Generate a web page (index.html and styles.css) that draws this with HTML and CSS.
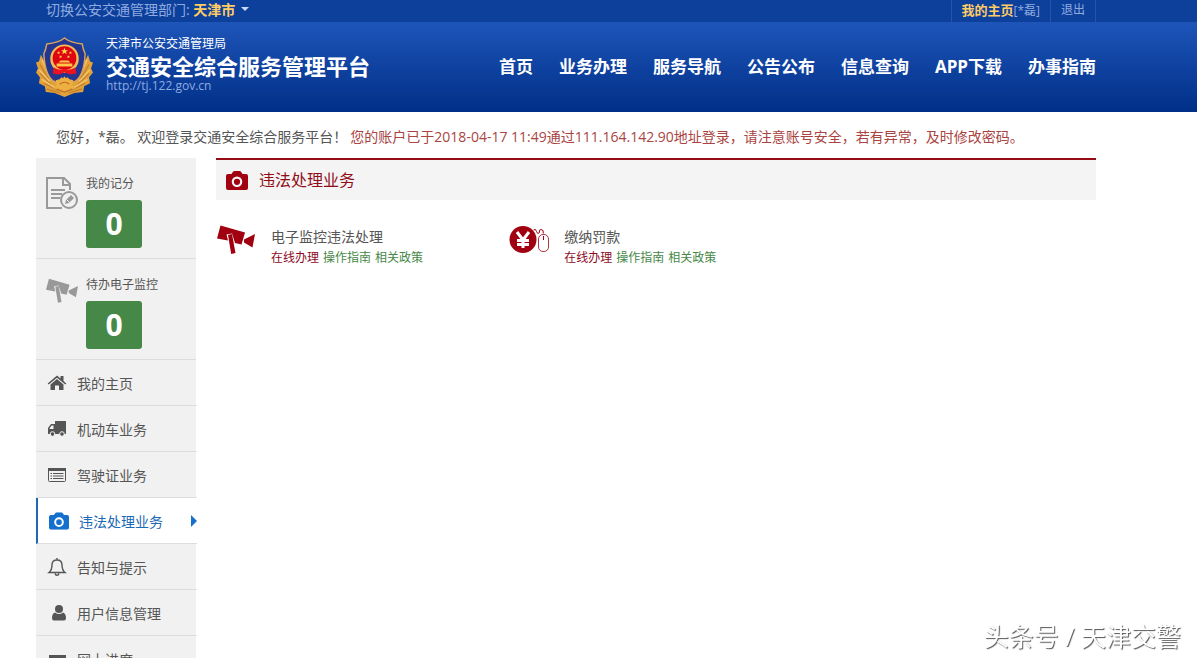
FILE: index.html
```html
<!DOCTYPE html>
<html lang="zh-CN">
<head>
<meta charset="utf-8">
<meta name="viewport" content="width=device-width, initial-scale=1">
<title>交通安全综合服务管理平台</title>
<link rel="stylesheet" href="styles.css">
</head>
<body>
<svg class="defs" aria-hidden="true">
  <symbol id="camera" viewBox="0 0 22 19">
    <path fill-rule="evenodd" d="M2 3h3.500l1.500-2.200Q7.500 0 8.500 0h5q1 0 1.500.8L16.500 3H20a2 2 0 0 1 2 2v12a2 2 0 0 1-2 2H2a2 2 0 0 1-2-2V5a2 2 0 0 1 2-2zM11 5.500a5.300 5.300 0 1 0 0 10.600 5.300 5.300 0 0 0 0-10.600zM11 7.700a3.100 3.100 0 1 1 0 6.200 3.100 3.100 0 0 1 0-6.200z" fill="currentColor"/>
  </symbol>
  <symbol id="cctv" viewBox="0 0 38 30">
    <path d="M3.500 0.500L28 7.500 24.500 19.500 18 18 15 8.500 9.500 9.500 11 15.500 0 13.500z" fill="currentColor"/>
    <path d="M11 10l4-1 3.500 19-4.300 1z" fill="currentColor"/>
    <path d="M27 14.500L38 9l-2.500 13.500L27 17.500z" fill="currentColor"/>
  </symbol>
</svg>

<div class="topbar">
  <div class="wrap topbar-row">
    <div class="region">切换公安交通管理部门: <button class="region-pick" type="button">天津市<span class="caret"></span></button></div>
    <div class="account">
      <a class="account-link" href="#"><b class="account-home">我的主页</b>[*磊]</a>
      <a class="account-link" href="#">退出</a>
    </div>
  </div>
</div>

<header class="header">
  <div class="wrap header-row">
    <a class="brand" href="#">
      <svg class="emblem" viewBox="0 0 58 62" aria-hidden="true">
        <path d="M5 18L3 25 0 26 2 32-0 36 4 41 3 47 9 50 10 56 19 57 29 61 39 57 48 56 49 50 55 47 54 41 58 36 56 32 58 26 55 25 53 18 48 28 29 46 10 28z" fill="#e3a13a"/>
        <path d="M4 28l9 15M4 37l12 12M8 47l14 7M54 28l-9 15M54 37L42 49M50 47l-14 7M11 53l14 4M47 53l-14 4" stroke="#c07f30" stroke-width="1.200"/>
        <path d="M6 23l7 16M3 33l11 12M6 43l14 9M52 23l-7 16M55 33L44 45M52 43l-14 9" stroke="#f3c469" stroke-width="1.500"/>
        <path d="M29 1Q23 6 11 7 10 13 8 17q1 22 10 28l11 5 11-5q9-6 10-28-2-4-3-10-12-1-18-6z" fill="#24368f" stroke="#d5a35c" stroke-width="1.500"/>
        <circle cx="29" cy="22" r="14.500" fill="#f3bd55"/>
        <circle cx="29" cy="21.500" r="12" fill="#df0612"/>
        <path d="M29 11l1 2.400h2.500l-2 1.600.8 2.500-2.300-1.500-2.300 1.500.8-2.500-2-1.600H28z" fill="#ffdc4c"/>
        <path d="M22 15h2v2h-2zM34 15h2v2h-2zM24 19h2v2h-2zM32 19h2v2h-2zM25 24h8l2 2H23zM21 27h16v3H21z" fill="#ffc748"/>
        <path d="M18 31q5 3 11 2 6 1 11-2l1 6-6 1-6-2-6 2-6-1z" fill="#ec1320"/>
        <path d="M24 43l2-2 1.500 1 1.500-2 1.500 2 1.500-1 2 2 4 1-1 5 3 3-11 5-11-5 3-3-1-5z" fill="#edae42"/>
        <path d="M24 48q5-4 10 0M21 53l8 3 8-3" fill="none" stroke="#b97024" stroke-width="1.200"/>
      </svg>
      <span class="brand-text">
        <span class="brand-org">天津市公安交通管理局</span>
        <strong class="brand-name">交通安全综合服务管理平台</strong>
        <span class="brand-url">http://tj.122.gov.cn</span>
      </span>
    </a>
    <nav class="nav">
      <a class="nav-link" href="#">首页</a>
      <a class="nav-link" href="#">业务办理</a>
      <a class="nav-link" href="#">服务导航</a>
      <a class="nav-link" href="#">公告公布</a>
      <a class="nav-link" href="#">信息查询</a>
      <a class="nav-link" href="#">APP下载</a>
      <a class="nav-link" href="#">办事指南</a>
    </nav>
  </div>
</header>

<div class="wrap">
  <p class="greeting"><span>您好，*磊。 欢迎登录交通安全综合服务平台！</span><span class="notice">您的账户已于2018-04-17 11:49通过111.164.142.90地址登录，请注意账号安全，若有异常，及时修改密码。</span></p>

  <div class="columns">
    <aside class="sidebar">
      <section class="stat">
        <svg class="stat-icon" viewBox="0 0 32 34" aria-hidden="true">
          <g fill="none" stroke="#999" stroke-width="2">
            <path d="M16 32H1V2h17l6 6v6M17 2v7h7"/>
            <path d="M5 14h14M5 18h11M5 22h9"/>
            <circle cx="23" cy="24" r="8"/>
          </g>
          <path d="M19 28l1-4 5-5 3 3-5 5z" fill="#999"/>
          <path d="M20.500 23.500l3 3" stroke="#f1f1f1"/>
        </svg>
        <div class="stat-body">
          <h2 class="stat-title">我的记分</h2>
          <div class="stat-value">0</div>
        </div>
      </section>
      <section class="stat">
        <svg class="stat-icon stat-cctv" viewBox="0 0 38 30" aria-hidden="true"><use href="#cctv"/></svg>
        <div class="stat-body">
          <h2 class="stat-title">待办电子监控</h2>
          <div class="stat-value">0</div>
        </div>
      </section>
      <nav class="menu">
        <a class="menu-link" href="#">
          <svg class="menu-icon" viewBox="0 0 20 18" aria-hidden="true"><path d="M10 1.500l3.500 3V2h3v5l2.800 2.500-1 1.100L10 3.700l-8.300 6.900-1-1.100z" fill="currentColor"/><path d="M10 5l6.500 5.500V16H12v-4.500H8V16H3.500v-5.500z" fill="currentColor"/></svg>
          我的主页</a>
        <a class="menu-link" href="#">
          <svg class="menu-icon" viewBox="0 0 20 18" aria-hidden="true"><path fill-rule="evenodd" d="M8 1h11v13H1V8l3-4h4zM6.500 5.500H4.700L2.700 8v1h3.800z" fill="currentColor"/><circle cx="5.500" cy="14" r="2.300" fill="currentColor" stroke="#f1f1f1"/><circle cx="15" cy="14" r="2.300" fill="currentColor" stroke="#f1f1f1"/></svg>
          机动车业务</a>
        <a class="menu-link" href="#">
          <svg class="menu-icon" viewBox="0 0 20 18" aria-hidden="true"><rect x="1.500" y="2.500" width="17" height="13" rx="1" fill="none" stroke="currentColor"/><path d="M1 2h18v3H1z" fill="currentColor"/><path d="M3.500 7.500h1.500M6 7.500h10.500M3.500 10h1.500M6 10h10.500M3.500 12.500h1.500M6 12.500h10.500" stroke="currentColor"/></svg>
          驾驶证业务</a>
        <a class="menu-link is-active" href="#" aria-current="page">
          <svg class="menu-icon" viewBox="0 0 22 19" aria-hidden="true"><use href="#camera"/></svg>
          违法处理业务</a>
        <a class="menu-link" href="#">
          <svg class="menu-icon" viewBox="0 0 20 18" aria-hidden="true"><path d="M10 0v2M2 14.500q3-2.500 3-7.500 0-5 5-5t5 5q0 5 3 7.500zM8 15.500q.5 1.800 2 1.800t2-1.800" fill="none" stroke="currentColor" stroke-width="1.400"/></svg>
          告知与提示</a>
        <a class="menu-link" href="#">
          <svg class="menu-icon" viewBox="0 0 20 18" aria-hidden="true"><circle cx="12" cy="5" r="4" fill="currentColor"/><path d="M8 8.500q4 3 8 0 3 1 3 5.500 0 2.500-2 2.500H7q-2 0-2-2.500 0-4.500 3-5.500z" fill="currentColor"/></svg>
          用户信息管理</a>
        <a class="menu-link" href="#">
          <svg class="menu-icon" viewBox="0 0 20 18" aria-hidden="true"><path fill-rule="evenodd" d="M2 5h17v12H2zM4 9v6h13V9z" fill="currentColor"/></svg>
          网上进度</a>
      </nav>
    </aside>

    <main class="main">
      <h1 class="panel-title"><svg class="panel-icon" viewBox="0 0 22 19" aria-hidden="true"><use href="#camera"/></svg>违法处理业务</h1>
      <div class="services">
        <article class="service">
          <svg class="service-icon" viewBox="0 0 40 30" aria-hidden="true"><use href="#cctv" x="1" width="38" height="30"/></svg>
          <div>
            <h2 class="service-title">电子监控违法处理</h2>
            <div class="service-links"><a class="do" href="#">在线办理</a><a href="#">操作指南</a><a href="#">相关政策</a></div>
          </div>
        </article>
        <article class="service">
          <svg class="service-icon" viewBox="0 0 40 30" aria-hidden="true">
            <circle cx="14" cy="14.500" r="13.500" fill="#a0000f"/>
            <path d="M8 7l6 8 6-8M14 14v9M8 15.500h12M8 19.500h12" fill="none" stroke="#fff" stroke-width="3"/>
            <path d="M24.500 5q2-2 3 1.500t3 1q-1-3 1.500-3 3 0 2.300 4" fill="none" stroke="#a0000f"/>
            <rect x="29.500" y="9.500" width="10" height="17" rx="4.500" fill="none" stroke="#b3343f"/>
            <path d="M34.500 11v4" stroke="#a0000f"/>
          </svg>
          <div>
            <h2 class="service-title">缴纳罚款</h2>
            <div class="service-links"><a class="do" href="#">在线办理</a><a href="#">操作指南</a><a href="#">相关政策</a></div>
          </div>
        </article>
      </div>
    </main>
  </div>
</div>
<div class="watermark">头条号 / 天津交警</div>
</body>
</html>
```
FILE: styles.css
```css
* { box-sizing: border-box; }

body {
  margin: 0;
  background: #fff;
  color: #555;
  font: 14px/20px "Open Sans", "Noto Sans CJK SC", sans-serif;
}

a { color: inherit; text-decoration: none; }
h1, h2, p { margin: 0; font-weight: 400; }
svg { display: block; flex: none; }
.defs { position: absolute; width: 0; height: 0; }
.wrap { padding: 0 101px 0 36px; }

/* Top bar */
.topbar { background: #0d409b; color: #8fabe0; }
.topbar-row { display: flex; justify-content: space-between; height: 22px; }
.region { padding-left: 10px; white-space: nowrap; }
.region-pick {
  padding: 0;
  border: 0;
  background: none;
  color: #ffcc66;
  font: inherit;
  font-weight: 700;
}
.caret {
  display: inline-block;
  margin-left: 6px;
  border: 4px solid transparent;
  border-top-color: #c9dafa;
  border-bottom: 0;
  vertical-align: 4px;
}
.account { display: flex; border-right: 1px solid #2355ad; font-size: 12px; }
.account-link { padding: 0 10px; border-left: 1px solid #2355ad; }
.account-home { color: #ffcc66; font-size: 13px; }

/* Header */
.header { background: linear-gradient(#1e55b9, #002f87); color: #fff; }
.header-row { display: flex; align-items: center; justify-content: space-between; height: 90px; }
.brand { display: flex; align-items: center; gap: 13px; white-space: nowrap; }
.emblem { width: 57px; height: 61px; }
.brand-text { display: flex; flex-direction: column; padding-bottom: 6px; }
.brand-org { font-size: 12px; line-height: 16px; }
.brand-name { font-size: 22px; line-height: 28px; }
.brand-url { color: #8fabe0; font-size: 12px; line-height: 12px; }
.nav { display: flex; gap: 26px; white-space: nowrap; }
.nav-link { font-size: 17px; font-weight: 700; line-height: 24px; }

/* Greeting */
.greeting { display: flex; gap: 3px; padding: 15px 0 11px 20px; white-space: nowrap; }
.notice { color: #a94442; }

/* Sidebar */
.columns { display: flex; align-items: flex-start; gap: 20px; }
.sidebar { flex: none; width: 160px; background: #f1f1f1; }
.stat {
  display: flex;
  gap: 8px;
  height: 101px;
  padding: 16px 10px 0;
  border-bottom: 1px solid #ddd;
}
.stat-icon { width: 32px; height: 38px; color: #999; }
.stat-cctv { height: 32px; }
.stat-title { font-size: 12px; white-space: nowrap; }
.stat-value {
  width: 56px;
  margin-top: 6px;
  border-radius: 3px;
  background: #468847;
  color: #fff;
  font-size: 30px;
  font-weight: 700;
  line-height: 48px;
  text-align: center;
}
.menu { margin-right: -1px; }
.menu-link {
  position: relative;
  display: flex;
  align-items: center;
  gap: 10px;
  height: 46px;
  padding: 2px 11px 0;
  border-bottom: 1px solid #ddd;
}
.menu-icon { width: 20px; height: 18px; margin-bottom: 2px; }
.is-active { border-left: 2px solid #1c69b5; background: #fff; color: #1c69b5; }
.is-active .menu-icon { color: #1570cd; }
.is-active::after {
  position: absolute;
  top: 17px;
  right: 0;
  border: 6px solid transparent;
  border-left-color: #1570cd;
  border-right: 0;
  content: "";
}

/* Main panel */
.main { flex: 1; }
.panel-title {
  display: flex;
  align-items: center;
  gap: 11px;
  height: 42px;
  padding: 0 10px;
  border-top: 2px solid #960d18;
  background: #f4f4f4;
  color: #900d18;
  font-size: 16px;
}
.panel-icon { width: 22px; height: 19px; color: #a0000f; }
.services { display: grid; grid-template-columns: repeat(3, 1fr); padding-top: 25px; }
.service { display: flex; gap: 15px; white-space: nowrap; }
.service-icon { width: 40px; height: 30px; color: #a0000f; }
.service-title { font-size: 14px; line-height: 24px; }
.service-links { display: flex; gap: 4px; color: #468847; font-size: 12px; line-height: 18px; }
.do { color: #8c0a1e; }

/* Watermark over the page */
.watermark {
  position: fixed;
  right: 16px;
  bottom: 4px;
  color: #fff;
  font-size: 25px;
  line-height: 36px;
  text-shadow: 1px 1px 1px #555;
}
```
